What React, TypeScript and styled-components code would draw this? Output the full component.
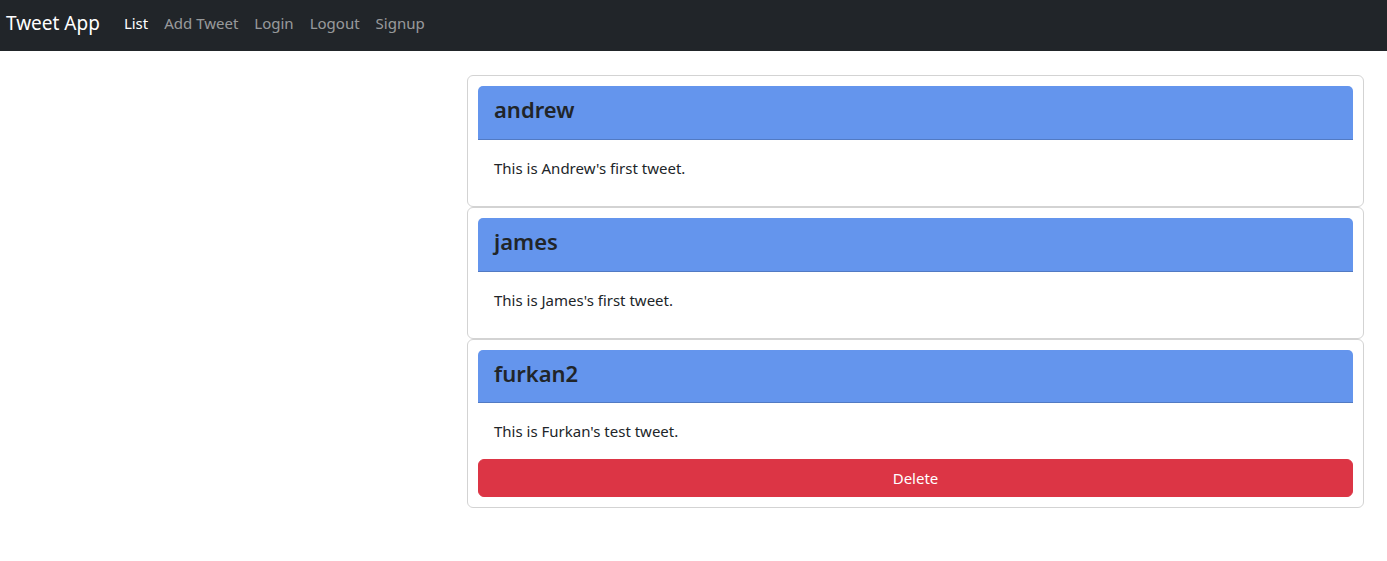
import React from 'react';
import styled, { createGlobalStyle } from 'styled-components';

type Tweet = {
  id: number;
  user: string;
  text: string;
  own?: boolean;
};

const tweets: Tweet[] = [
  { id: 1, user: 'andrew', text: "This is Andrew's first tweet." },
  { id: 2, user: 'james', text: "This is James's first tweet." },
  { id: 3, user: 'furkan2', text: "This is Furkan's test tweet.", own: true },
];

const GlobalStyle = createGlobalStyle`
  body {
    margin: 0;
    font-family: "Noto Sans", "Open Sans", sans-serif;
    font-size: 15px;
    line-height: 24px;
    color: #212529;
    background: #fff;
  }
`;

const Navbar = styled.nav`
  box-sizing: border-box;
  display: flex;
  align-items: center;
  height: 51px;
  padding: 0 6px 5px;
  background: #212529;
`;

const Brand = styled.a`
  font-size: 19px;
  line-height: 30px;
  color: #fff;
  text-decoration: none;
  margin-right: 16px;
`;

const NavLink = styled.a<{ $active?: boolean }>`
  padding: 0 8px;
  color: ${(p) => (p.$active ? '#fff' : 'rgba(255, 255, 255, 0.55)')};
  text-decoration: none;
`;

const Main = styled.main`
  display: grid;
  grid-template-columns: 467px 1fr 23px;
  padding-top: 24px;
`;

const List = styled.div`
  grid-column: 2;
  display: flex;
  flex-direction: column;
`;

const Card = styled.div`
  border: 1px solid #d3d3d3;
  border-radius: 6px;
  padding: 10px;
`;

const CardHeader = styled.div`
  background: cornflowerblue;
  border-bottom: 1px solid rgba(0, 0, 0, 0.175);
  border-radius: 5px 5px 0 0;
  padding: 9px 16px 7px;

  h4 {
    margin: 0 0 8px;
    font-size: 22px;
    font-weight: 600;
    line-height: 28.8px;
  }
`;

const CardBody = styled.div`
  padding: 16px;

  p {
    margin: 0;
  }
`;

const DeleteButton = styled.button`
  display: block;
  width: 100%;
  padding: 6px 12px;
  border: 1px solid #dc3545;
  border-radius: 6px;
  background: #dc3545;
  color: #fff;
  font: inherit;
  cursor: pointer;
`;

export default function App() {
  return (
    <>
      <GlobalStyle />
      <Navbar>
        <Brand href="#">Tweet App</Brand>
        <NavLink href="#" $active>List</NavLink>
        <NavLink href="#">Add Tweet</NavLink>
        <NavLink href="#">Login</NavLink>
        <NavLink href="#">Logout</NavLink>
        <NavLink href="#">Signup</NavLink>
      </Navbar>
      <Main>
        <List>
          {tweets.map((t) => (
            <Card key={t.id}>
              <CardHeader>
                <h4>{t.user}</h4>
              </CardHeader>
              <CardBody>
                <p>{t.text}</p>
              </CardBody>
              {t.own && <DeleteButton>Delete</DeleteButton>}
            </Card>
          ))}
        </List>
      </Main>
    </>
  );
}
